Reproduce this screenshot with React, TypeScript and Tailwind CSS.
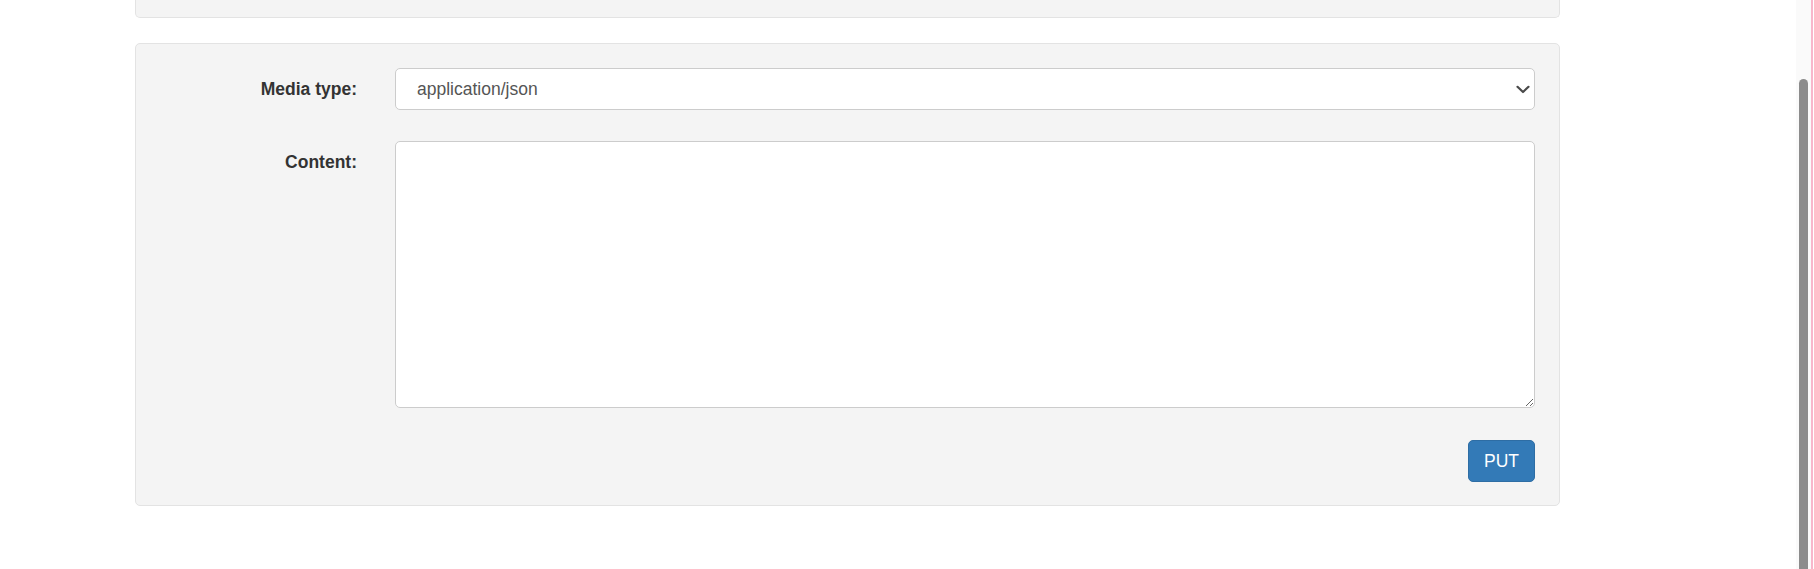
import React from "react";

function Chevron() {
  return (
    <svg width="14" height="9" viewBox="0 0 14 9" fill="none" aria-hidden="true">
      <path d="M1.5 1.8 L7 7 L12.5 1.8" stroke="#4a4a4a" strokeWidth="2.2" strokeLinecap="round" strokeLinejoin="round" />
    </svg>
  );
}

export default function App() {
  return (
    <div className="flex h-[569px] w-[1814px] overflow-hidden bg-white font-['Liberation_Sans',Arial,sans-serif] text-[#333]">
      <main className="flex w-[1796px] flex-col pl-[135px]">
        <div className="h-[18px] w-[1425px] rounded-b-[5px] border border-t-0 border-[#e3e3e3] bg-[#f4f4f4]" />
        <form className="mt-[25px] flex w-[1425px] flex-col rounded-[5px] border border-[#e3e3e3] bg-[#f4f4f4] px-[24px] pt-[24px] pb-[23px]">
          <div className="flex gap-[38px]">
            <label className="w-[197px] pt-[9px] text-right text-[17.5px] font-bold leading-[25px] text-[#333]">
              Media type:
            </label>
            <div className="flex h-[42px] flex-1 items-center justify-between rounded-[5px] border border-[#ccc] bg-white pl-[21px] pr-[4px]">
              <span className="text-[17.5px] leading-[25px] text-[#555]">application/json</span>
              <Chevron />
            </div>
          </div>
          <div className="mt-[31px] flex gap-[38px]">
            <label className="w-[197px] pt-[9px] text-right text-[17.5px] font-bold leading-[25px] text-[#333]">
              Content:
            </label>
            <textarea
              className="h-[267px] flex-1 rounded-[5px] border border-[#ccc] bg-white px-[15px] py-[9px] text-[17.5px] text-[#555] outline-none"
              defaultValue=""
            />
          </div>
          <div className="mt-[32px] flex justify-end">
            <button
              type="button"
              className="h-[42px] w-[67px] rounded-[5px] border border-[#2e6da4] bg-[#337ab7] text-[17.5px] leading-[25px] text-white"
            >
              PUT
            </button>
          </div>
        </form>
      </main>
      <div className="flex w-[15px] flex-col items-start bg-[#fafafa] pl-[3px] pt-[79px]">
        <div className="w-[9px] flex-1 rounded-t-full bg-[#8c8c8c]" />
      </div>
      <div className="w-[2px] bg-[#f8b6cb]" />
      <div className="w-[1px] bg-white" />
    </div>
  );
}
